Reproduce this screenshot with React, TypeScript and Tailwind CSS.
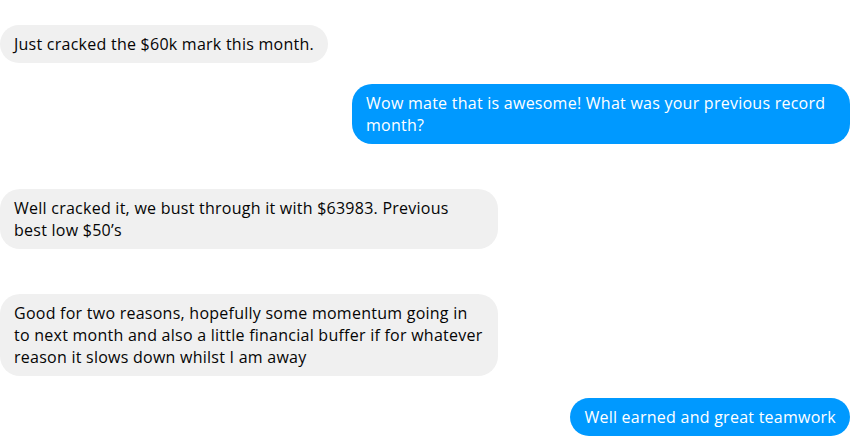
import React from "react";

type Msg = { lines: string[]; mine: boolean; mt: string; wide?: boolean };

const messages: Msg[] = [
  { lines: ["Just cracked the $60k mark this month."], mine: false, mt: "mt-[25px]" },
  { lines: ["Wow mate that is awesome! What was your previous record", "month?"], mine: true, mt: "mt-[21px]", wide: true },
  { lines: ["Well cracked it, we bust through it with $63983. Previous", "best low $50’s"], mine: false, mt: "mt-[45px]", wide: true },
  {
    lines: [
      "Good for two reasons, hopefully some momentum going in",
      "to next month and also a little financial buffer if for whatever",
      "reason it slows down whilst I am away",
    ],
    mine: false,
    mt: "mt-[45px]",
    wide: true,
  },
  { lines: ["Well earned and great teamwork"], mine: true, mt: "mt-[22px]" },
];

export default function App() {
  return (
    <div
      className="w-[855px] h-[443px] bg-white overflow-hidden flex flex-col pr-[5px]"
      style={{ fontFamily: '"Open Sans", "Noto Sans", sans-serif' }}
    >
      {messages.map((m, i) => (
        <div key={i} className={`flex ${m.mt} ${m.mine ? "justify-end" : "justify-start"}`}>
          <div
            className={`${m.wide ? "w-[498px]" : "max-w-[498px]"} whitespace-nowrap rounded-[20px] px-[14px] py-[8px] text-[16px] tracking-[0.25px] leading-[22px] ${
              m.mine ? "bg-[#0099ff] text-white" : "bg-[#f0f0f0] text-[#050505]"
            }`}
          >
            {m.lines.map((l, j) => (
              <React.Fragment key={j}>
                {j > 0 && <br />}
                {l}
              </React.Fragment>
            ))}
          </div>
        </div>
      ))}
    </div>
  );
}
